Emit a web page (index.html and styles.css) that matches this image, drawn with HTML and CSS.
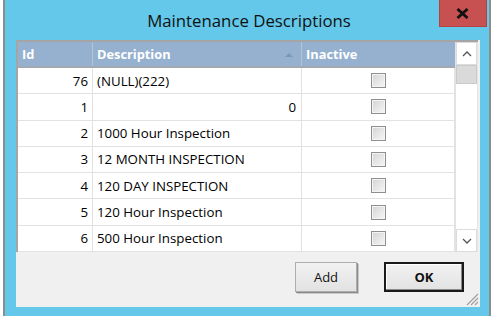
FILE: index.html
```html
<!DOCTYPE html>
<html>
<head>
<meta charset="utf-8">
<link rel="stylesheet" href="styles.css">
</head>
<body>
<div class="window">
  <div class="titlebar">
    <span class="title">Maintenance Descriptions</span>
    <div class="close"><svg width="13" height="11" viewBox="0 0 13 11"><path d="M1.5 1 L11.5 10 M11.5 1 L1.5 10" stroke="#111" stroke-width="2.8" fill="none"/></svg></div>
  </div>
  <div class="client">
    <div class="grid">
      <div class="table">
        <div class="row head">
          <div class="c id">Id</div>
          <div class="c desc">Description<span class="sort"></span></div>
          <div class="c inact">Inactive</div>
        </div>
        <div class="row"><div class="c id">76</div><div class="c desc">(NULL)(222)</div><div class="c inact"><span class="cb"></span></div></div>
        <div class="row"><div class="c id">1</div><div class="c desc right">0</div><div class="c inact"><span class="cb"></span></div></div>
        <div class="row"><div class="c id">2</div><div class="c desc">1000 Hour Inspection</div><div class="c inact"><span class="cb"></span></div></div>
        <div class="row"><div class="c id">3</div><div class="c desc">12 MONTH INSPECTION</div><div class="c inact"><span class="cb"></span></div></div>
        <div class="row"><div class="c id">4</div><div class="c desc">120 DAY INSPECTION</div><div class="c inact"><span class="cb"></span></div></div>
        <div class="row"><div class="c id">5</div><div class="c desc">120 Hour Inspection</div><div class="c inact"><span class="cb"></span></div></div>
        <div class="row"><div class="c id">6</div><div class="c desc">500 Hour Inspection</div><div class="c inact"><span class="cb"></span></div></div>
      </div>
      <div class="vscroll">
        <div class="arrow"><svg width="10" height="6" viewBox="0 0 10 6"><path d="M1 5 L5 1 L9 5" stroke="#555" stroke-width="1.3" fill="none"/></svg></div>
        <div class="thumb"></div>
        <div class="track"></div>
        <div class="arrow"><svg width="10" height="6" viewBox="0 0 10 6"><path d="M1 1 L5 5 L9 1" stroke="#555" stroke-width="1.3" fill="none"/></svg></div>
      </div>
    </div>
    <div class="buttons">
      <button class="btn">Add</button>
      <button class="btn ok">OK</button>
    </div>
    <svg class="grip" width="15" height="15" viewBox="0 0 15 15"><path d="M14 3 L3 14 M14 7 L7 14 M14 11 L11 14" stroke="#a0a0a0" stroke-width="1.2" fill="none"/></svg>
  </div>
</div>
</body>
</html>
```
FILE: styles.css
```css
html, body { margin: 0; padding: 0; background: #ffffff; }
body { font-family: "Open Sans", "Noto Sans", sans-serif; font-size: 13.3px; color: #000; }

.window {
  margin-left: 3px;
  width: 488px;
  height: 316px;
  box-sizing: border-box;
  background: #63c8e9;
  border-left: 2px solid #8c8c8c;
  border-right: 2px solid #8c8c8c;
  padding: 0 9px 9px 11px;
  display: flex;
  flex-direction: column;
}

.titlebar {
  height: 40px;
  position: relative;
  display: flex;
  align-items: center;
  justify-content: center;
}
.title {
  font-size: 16.8px;
  color: #111;
  margin-top: 1px;
  margin-left: 2px;
}
.close {
  position: absolute;
  right: -7px;
  top: 0;
  width: 48px;
  height: 27px;
  background: #c75050;
  box-sizing: border-box;
  border: 1px solid #b0453f;
  border-top: none;
  display: flex;
  align-items: center;
  justify-content: center;
  padding-right: 2px;
}

.client {
  flex: 1;
  background: #f0f0f0;
  position: relative;
  display: flex;
  flex-direction: column;
}

.grid {
  display: flex;
  height: 212px;
  box-sizing: border-box;
  border-top: 2px solid #a5a5a5;
  border-left: 2px solid #a5a5a5;
  margin-right: 2px;
  background: #fff;
}
.table { flex: 1; display: flex; flex-direction: column; }
.row {
  display: grid;
  grid-template-columns: 75px 209px 153px;
  height: 26.3px;
  box-sizing: border-box;
  border-bottom: 1px solid #e2e2e2;
  align-items: center;
}
.row.head {
  height: 26px;
  background: #96b1cf;
  border-bottom: 2px solid #a2a9b2;
  color: #fff;
  font-weight: bold;
  font-size: 12.8px;
}
.c {
  height: 100%;
  display: flex;
  align-items: center;
  box-sizing: border-box;
  border-right: 1px solid #e2e2e2;
  white-space: nowrap;
}
.head .c { border-right: 1px solid #b4c5da; }
.head .id { justify-content: flex-start; padding-left: 4px; }
.id { justify-content: flex-end; padding-right: 4px; }
.desc { padding-left: 4px; position: relative; }
.desc.right { justify-content: flex-end; padding-right: 5px; }
.inact { justify-content: center; }
.head .inact { justify-content: flex-start; padding-left: 4px; border-right: none; }

.sort {
  position: absolute;
  right: 8px;
  top: 11px;
  width: 0; height: 0;
  border-left: 4px solid transparent;
  border-right: 4px solid transparent;
  border-bottom: 4px solid #7d97b7;
}

.cb {
  width: 15px;
  height: 15px;
  box-sizing: border-box;
  border: 1px solid #8f8f8f;
  background: linear-gradient(135deg, #d4d4d4, #f6f6f6);
  box-shadow: inset 0 0 0 1px #f4f4f4;
  margin-left: 1px;
}

.vscroll {
  width: 21px;
  display: flex;
  flex-direction: column;
  background: #fff;
  border-left: 1px solid #e2e2e2;
  border-right: 1px solid #e6e6e6;
}
.arrow {
  height: 23px;
  box-sizing: border-box;
  border: 1px solid #dcdcdc;
  background: #fff;
  display: flex;
  align-items: center;
  justify-content: center;
}
.thumb {
  height: 19px;
  background: #dadada;
  border: 1px solid #cacaca;
  box-sizing: border-box;
}
.track { flex: 1; background: #fff; }

.buttons {
  display: flex;
  justify-content: flex-end;
  gap: 27px;
  padding: 10px 16px 0 0;
}
.btn {
  width: 62px;
  height: 30px;
  font-family: "Open Sans", "Noto Sans", sans-serif;
  font-size: 13px;
  color: #111;
  background: linear-gradient(#f2f2f2, #e2e2e2);
  border: 1px solid #adadad;
  box-shadow: 1px 1px 0 #8a8a8a, 2px 2px 0 #c9c9c9;
  padding: 0;
}
.btn.ok {
  width: 80px;
  font-weight: bold;
  border: 2px solid #1a1a1a;
  box-shadow: inset -1px -1px 0 #8a8a8a, inset 1px 1px 0 #fff;
}
.grip {
  position: absolute;
  right: 1px;
  bottom: 1px;
}
```
